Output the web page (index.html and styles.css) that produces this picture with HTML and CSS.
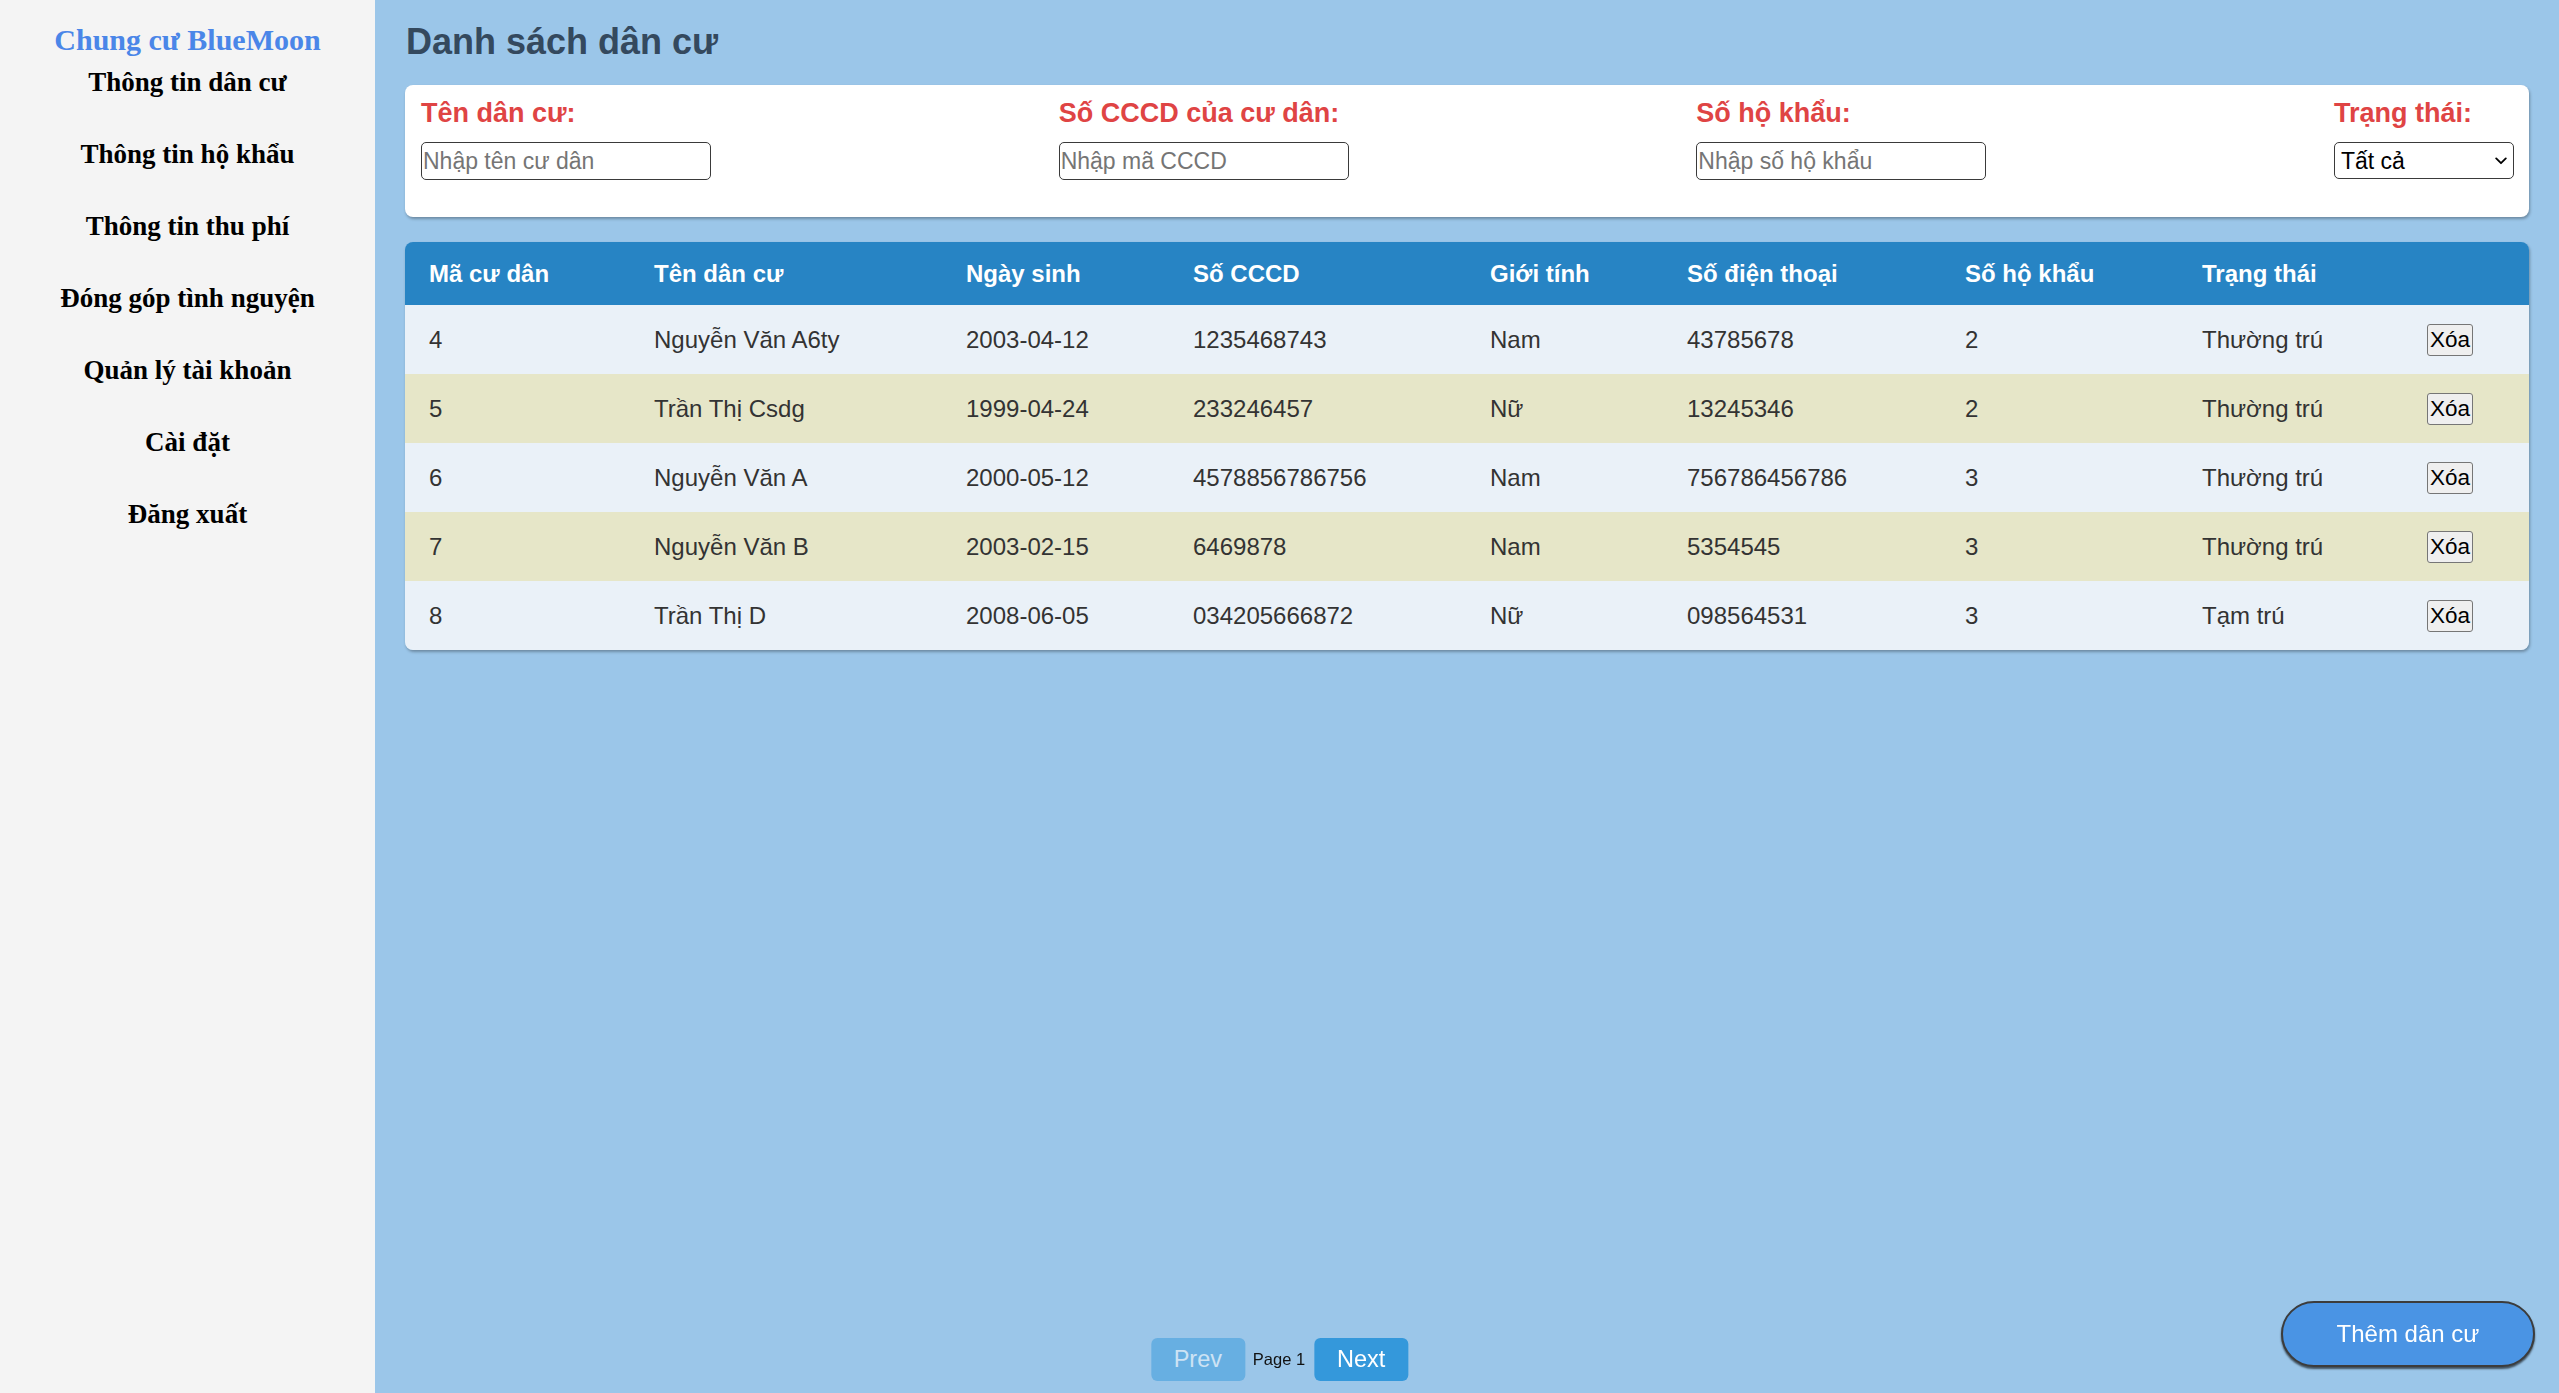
FILE: index.html
```html
<!DOCTYPE html>
<html lang="vi">
<head>
<meta charset="utf-8">
<title>Danh sách dân cư</title>
<link rel="stylesheet" href="styles.css">
</head>
<body>
<div class="layout">
  <aside class="sidebar">
    <div class="brand">Chung cư BlueMoon</div>
    <nav class="menu">
      <a class="menu-item">Thông tin dân cư</a>
      <a class="menu-item">Thông tin hộ khẩu</a>
      <a class="menu-item">Thông tin thu phí</a>
      <a class="menu-item">Đóng góp tình nguyện</a>
      <a class="menu-item">Quản lý tài khoản</a>
      <a class="menu-item">Cài đặt</a>
      <a class="menu-item">Đăng xuất</a>
    </nav>
  </aside>
  <main class="content">
    <h1 class="page-title">Danh sách dân cư</h1>
    <section class="filters">
      <div class="filter">
        <label class="filter-label">Tên dân cư:</label>
        <input class="filter-input" type="text" placeholder="Nhập tên cư dân">
      </div>
      <div class="filter">
        <label class="filter-label">Số CCCD của cư dân:</label>
        <input class="filter-input" type="text" placeholder="Nhập mã CCCD">
      </div>
      <div class="filter">
        <label class="filter-label">Số hộ khẩu:</label>
        <input class="filter-input" type="text" placeholder="Nhập số hộ khẩu">
      </div>
      <div class="filter">
        <label class="filter-label">Trạng thái:</label>
        <div class="select-wrap">
          <select class="filter-select">
            <option>Tất cả</option>
            <option>Thường trú</option>
            <option>Tạm trú</option>
          </select>
          <svg class="select-arrow" width="12" height="8" viewBox="0 0 12 8" aria-hidden="true">
            <path d="M1.2 1.4 L6 6.2 L10.8 1.4" fill="none" stroke="#000" stroke-width="1.8" stroke-linecap="round" stroke-linejoin="round"/>
          </svg>
        </div>
      </div>
    </section>
    <table class="residents">
      <colgroup>
        <col class="c1"><col class="c2"><col class="c3"><col class="c4"><col class="c5"><col class="c6"><col class="c7"><col class="c8"><col class="c9">
      </colgroup>
      <thead>
        <tr>
          <th>Mã cư dân</th>
          <th>Tên dân cư</th>
          <th>Ngày sinh</th>
          <th>Số CCCD</th>
          <th>Giới tính</th>
          <th>Số điện thoại</th>
          <th>Số hộ khẩu</th>
          <th>Trạng thái</th>
          <th></th>
        </tr>
      </thead>
      <tbody>
        <tr>
          <td>4</td><td>Nguyễn Văn A6ty</td><td>2003-04-12</td><td>1235468743</td><td>Nam</td><td>43785678</td><td>2</td><td>Thường trú</td><td><button class="del-btn">Xóa</button></td>
        </tr>
        <tr>
          <td>5</td><td>Trần Thị Csdg</td><td>1999-04-24</td><td>233246457</td><td>Nữ</td><td>13245346</td><td>2</td><td>Thường trú</td><td><button class="del-btn">Xóa</button></td>
        </tr>
        <tr>
          <td>6</td><td>Nguyễn Văn A</td><td>2000-05-12</td><td>4578856786756</td><td>Nam</td><td>756786456786</td><td>3</td><td>Thường trú</td><td><button class="del-btn">Xóa</button></td>
        </tr>
        <tr>
          <td>7</td><td>Nguyễn Văn B</td><td>2003-02-15</td><td>6469878</td><td>Nam</td><td>5354545</td><td>3</td><td>Thường trú</td><td><button class="del-btn">Xóa</button></td>
        </tr>
        <tr>
          <td>8</td><td>Trần Thị D</td><td>2008-06-05</td><td>034205666872</td><td>Nữ</td><td>098564531</td><td>3</td><td>Tạm trú</td><td><button class="del-btn">Xóa</button></td>
        </tr>
      </tbody>
    </table>
  </main>
</div>
<div class="pager">
  <button class="pager-btn is-disabled" disabled>Prev</button>
  <span class="pager-label">Page 1</span>
  <button class="pager-btn">Next</button>
</div>
<button class="add-btn">Thêm dân cư</button>
</body>
</html>
```
FILE: styles.css
```css
html, body {
  margin: 0;
  padding: 0;
}
body {
  font-family: "Liberation Sans", Arial, sans-serif;
  background: #9bc6e9;
}
.layout {
  display: flex;
  min-height: 100vh;
}
.sidebar {
  width: 375px;
  flex: 0 0 375px;
  background: #f4f4f4;
  padding-top: 24px;
  box-sizing: border-box;
  font-family: "Liberation Serif", "Times New Roman", serif;
  text-align: center;
}
.brand {
  color: #4a86e8;
  font-weight: bold;
  font-size: 30px;
  line-height: 32px;
  margin-bottom: 10px;
}
.menu {
  display: flex;
  flex-direction: column;
  gap: 40px;
}
.menu-item {
  color: #000;
  font-weight: bold;
  font-size: 27px;
  line-height: 32px;
  text-decoration: none;
}
.content {
  flex: 1;
  padding: 22px 30px 0 30px;
  min-width: 0;
}
.page-title {
  margin: 0 0 23px 1px;
  font-size: 36px;
  line-height: 40px;
  font-weight: bold;
  color: #34495e;
}
.filters {
  background: #fff;
  border-radius: 8px;
  box-shadow: 1px 2px 3px rgba(0, 0, 0, 0.3);
  padding: 13px 15px 37px 16px;
  display: flex;
  justify-content: space-between;
}
.filter {
  display: flex;
  flex-direction: column;
  align-items: flex-start;
}
.filter-label {
  color: #df4444;
  font-weight: bold;
  font-size: 27px;
  line-height: 30px;
  margin-bottom: 14px;
}
.filter-input {
  box-sizing: border-box;
  width: 290px;
  height: 38px;
  padding: 0 1px;
  border: 1px solid #3a3a3a;
  border-radius: 5px;
  font-family: "Liberation Sans", Arial, sans-serif;
  font-size: 23px;
  color: #000;
  background: #fff;
}
.filter-input::placeholder {
  color: #757575;
}
.select-wrap {
  position: relative;
  width: 180px;
  height: 37px;
}
.filter-select {
  -webkit-appearance: none;
  appearance: none;
  box-sizing: border-box;
  width: 180px;
  height: 37px;
  padding: 0 24px 0 6px;
  border: 1px solid #3a3a3a;
  border-radius: 5px;
  font-family: "Liberation Sans", Arial, sans-serif;
  font-size: 23px;
  color: #000;
  background: #fff;
}
.select-arrow {
  position: absolute;
  right: 7px;
  top: 15px;
  pointer-events: none;
}
.residents {
  margin-top: 25px;
  width: 2124px;
  table-layout: fixed;
  border-collapse: separate;
  border-spacing: 0;
  border-radius: 8px;
  overflow: hidden;
  box-shadow: 1px 2px 3px rgba(0, 0, 0, 0.3);
}
.c1 { width: 225px; }
.c2 { width: 312px; }
.c3 { width: 227px; }
.c4 { width: 297px; }
.c5 { width: 197px; }
.c6 { width: 278px; }
.c7 { width: 237px; }
.c8 { width: 225px; }
.c9 { width: 126px; }
.residents th {
  background: #2784c4;
  color: #fff;
  font-weight: bold;
  font-size: 24px;
  text-align: left;
  height: 63px;
  padding: 0 0 0 24px;
  vertical-align: middle;
}
.residents td {
  font-size: 24px;
  color: #333;
  height: 69px;
  padding: 0 0 0 24px;
  vertical-align: middle;
  white-space: nowrap;
}
.residents tbody tr:nth-child(odd) td {
  background: #eaf1f8;
}
.residents tbody tr:nth-child(even) td {
  background: #e6e6c8;
}
.del-btn {
  box-sizing: border-box;
  height: 32px;
  padding: 0 2px;
  font-family: "Liberation Sans", Arial, sans-serif;
  font-size: 22.5px;
  color: #000;
  background: #efefef;
  border: 1px solid #767676;
  border-radius: 3px;
  display: block;
}
.pager {
  position: fixed;
  left: 50%;
  bottom: 12px;
  transform: translateX(-50%);
  display: flex;
  align-items: center;
  gap: 8px;
}
.pager-btn {
  box-sizing: border-box;
  width: 94px;
  height: 43px;
  border: none;
  border-radius: 6px;
  background: #3498db;
  color: #fff;
  font-family: "Liberation Sans", Arial, sans-serif;
  font-size: 23.5px;
  padding: 0;
}
.pager-btn.is-disabled {
  opacity: 0.5;
}
.pager-label {
  font-size: 16.5px;
  color: #111;
  margin-right: 1px;
}
.add-btn {
  position: fixed;
  right: 24px;
  bottom: 26px;
  box-sizing: border-box;
  width: 254px;
  height: 66px;
  border-radius: 33px;
  border: 2px solid #3c3c3c;
  box-shadow: 0 2px 2px rgba(0, 0, 0, 0.6);
  background: #4a94e4;
  color: #fff;
  font-family: "Liberation Sans", Arial, sans-serif;
  font-size: 24px;
}
```
